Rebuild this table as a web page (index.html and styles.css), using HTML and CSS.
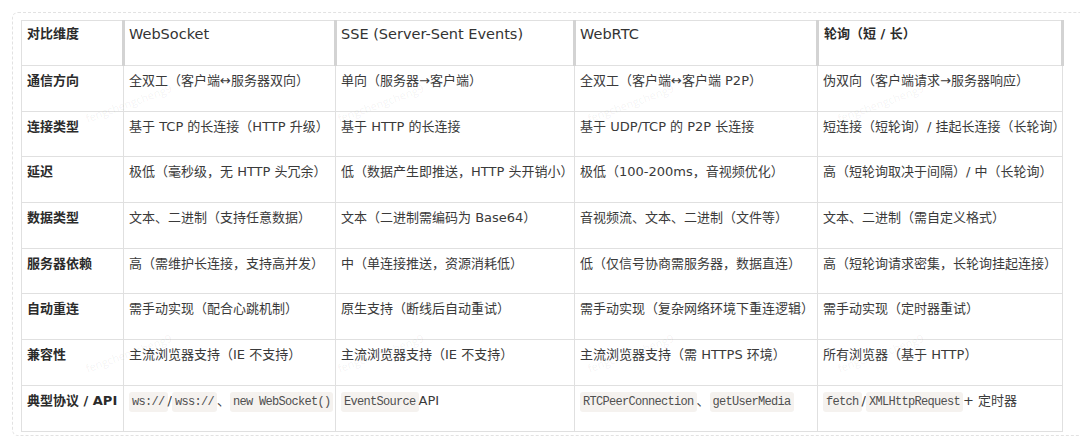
FILE: index.html
```html
<!DOCTYPE html>
<html lang="zh-CN">
<head>
<meta charset="utf-8">
<title>实时通信方案对比</title>
<link rel="stylesheet" href="styles.css">
</head>
<body>
<div class="frame">
  <table class="cmp">
    <colgroup>
      <col class="c1"><col class="c2"><col class="c3"><col class="c4"><col class="c5">
    </colgroup>
    <thead>
      <tr>
        <th class="strong">对比维度</th>
        <th>WebSocket</th>
        <th>SSE (Server-Sent Events)</th>
        <th>WebRTC</th>
        <th class="strong">轮询（短 / 长）</th>
      </tr>
    </thead>
    <tbody>
      <tr>
        <td class="dim">通信方向</td>
        <td>全双工（客户端↔服务器双向）</td>
        <td>单向（服务器→客户端）</td>
        <td>全双工（客户端↔客户端 P2P）</td>
        <td>伪双向（客户端请求→服务器响应）</td>
      </tr>
      <tr>
        <td class="dim">连接类型</td>
        <td>基于 TCP 的长连接（HTTP 升级）</td>
        <td>基于 HTTP 的长连接</td>
        <td>基于 UDP/TCP 的 P2P 长连接</td>
        <td>短连接（短轮询）/ 挂起长连接（长轮询）</td>
      </tr>
      <tr>
        <td class="dim">延迟</td>
        <td>极低（毫秒级，无 HTTP 头冗余）</td>
        <td>低（数据产生即推送，HTTP 头开销小）</td>
        <td>极低（100-200ms，音视频优化）</td>
        <td>高（短轮询取决于间隔）/ 中（长轮询）</td>
      </tr>
      <tr>
        <td class="dim">数据类型</td>
        <td>文本、二进制（支持任意数据）</td>
        <td>文本（二进制需编码为 Base64）</td>
        <td>音视频流、文本、二进制（文件等）</td>
        <td>文本、二进制（需自定义格式）</td>
      </tr>
      <tr>
        <td class="dim">服务器依赖</td>
        <td>高（需维护长连接，支持高并发）</td>
        <td>中（单连接推送，资源消耗低）</td>
        <td>低（仅信号协商需服务器，数据直连）</td>
        <td>高（短轮询请求密集，长轮询挂起连接）</td>
      </tr>
      <tr>
        <td class="dim">自动重连</td>
        <td>需手动实现（配合心跳机制）</td>
        <td>原生支持（断线后自动重试）</td>
        <td>需手动实现（复杂网络环境下重连逻辑）</td>
        <td>需手动实现（定时器重试）</td>
      </tr>
      <tr>
        <td class="dim">兼容性</td>
        <td>主流浏览器支持（IE 不支持）</td>
        <td>主流浏览器支持（IE 不支持）</td>
        <td>主流浏览器支持（需 HTTPS 环境）</td>
        <td>所有浏览器（基于 HTTP）</td>
      </tr>
      <tr>
        <td class="dim">典型协议 / API</td>
        <td><code>ws://</code>/<code>wss://</code>、<code>new WebSocket()</code></td>
        <td><code>EventSource</code>API</td>
        <td><code>RTCPeerConnection</code>、<code>getUserMedia</code></td>
        <td><code>fetch</code>/<code>XMLHttpRequest</code>+ 定时器</td>
      </tr>
    </tbody>
  </table>
  <div class="marks" aria-hidden="true">
    <span class="wm w1">fengchengcheng9</span>
    <span class="wm w2">fengchengcheng9</span>
    <span class="wm w3">fengchengcheng9</span>
    <span class="wm w4">fengchengcheng9</span>
    <span class="wm w5">fengchengcheng9</span>
    <span class="wm w6">fengchengcheng9</span>
    <span class="wm w7">fengchengcheng9</span>
    <span class="wm w8">fengchengcheng9</span>
  </div>
</div>
</body>
</html>
```

FILE: styles.css
```css
html, body {
  margin: 0;
  padding: 0;
  background: #ffffff;
  overflow: hidden;
}

body {
  width: 1080px;
  height: 448px;
  font-family: "DejaVu Sans", "Noto Sans CJK SC", sans-serif;
  color: #3a3a3a;
}

.frame {
  position: relative;
  margin: 12px 0 0 12px;
  width: 1090px;
  height: 424px;
  border: 1px dashed #e2e2e2;
  border-radius: 6px;
  padding: 7px 0 0 8px;
  box-sizing: border-box;
}

.cmp {
  border-collapse: collapse;
  table-layout: fixed;
  width: 1041px;
  font-size: 13px;
  line-height: 20px;
}

.c1 { width: 102px; }
.c2 { width: 212px; }
.c3 { width: 239px; }
.c4 { width: 243px; }
.c5 { width: 245px; }

.cmp th,
.cmp td {
  border: 1px solid #e0e0e0;
  text-align: left;
  vertical-align: top;
  padding: 5px 5px 0 5px;
  white-space: nowrap;
  overflow: visible;
}

.cmp thead tr { height: 45px; }
.cmp tbody tr { height: 45.7px; }

.cmp th {
  font-weight: 400;
  font-size: 14.5px;
  color: #333;
  padding: 3px 4px 0 4px;
  border-right: 3px solid #d3d3d3;
}

.cmp th.strong {
  font-weight: 700;
  font-size: 13px;
  color: #2b2b2b;
  padding-left: 5px;
}

.cmp td.dim {
  font-weight: 700;
  color: #2b2b2b;
}

code {
  font-family: "Liberation Mono", monospace;
  font-size: 12px;
  letter-spacing: -0.7px;
  color: #505050;
  background: #f5f2ef;
  border-radius: 3px;
  padding: 3px 3px;
}

.marks {
  position: absolute;
  inset: 0;
  pointer-events: none;
}

.wm {
  position: absolute;
  font-family: "Open Sans", sans-serif;
  font-size: 11px;
  color: rgba(0, 0, 0, 0.06);
  transform: rotate(-20deg);
  transform-origin: left center;
  white-space: nowrap;
}

.w1 { left: 73px;  top: 98px; }
.w2 { left: 325px; top: 98px; }
.w3 { left: 575px; top: 98px; }
.w4 { left: 825px; top: 98px; }
.w5 { left: 73px;  top: 348px; }
.w6 { left: 325px; top: 348px; }
.w7 { left: 575px; top: 348px; }
.w8 { left: 825px; top: 348px; }
```
